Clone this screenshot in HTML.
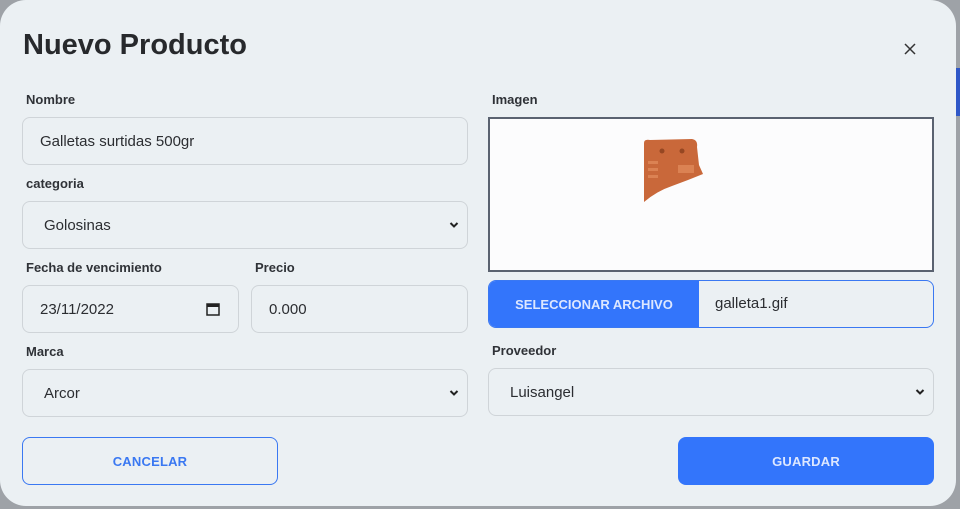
<!DOCTYPE html>
<html><head><style>
*{box-sizing:border-box;margin:0;padding:0}
body{width:960px;height:509px;background:#9ea2a7;font-family:"Liberation Sans",sans-serif;position:relative;overflow:hidden;color:#2b2d31}
.dlg{position:absolute;left:0;top:0;width:956px;height:506px;background:#ebf0f3;border-radius:26px}
.strip{position:absolute;left:956px;top:68px;width:4px;height:48px;background:#2f57c7}
.a{position:absolute}
h1{position:absolute;left:23px;top:29px;font-size:29px;font-weight:bold;color:#27292c}
.lbl{position:absolute;font-size:13px;font-weight:bold;color:#2f3237}
.in{position:absolute;border:1px solid #cfd4d8;border-radius:8px;background:#ebf0f3;font-size:15px;color:#2b2d31;display:flex;align-items:center;padding-left:17px}
.sel{padding-left:21px}
.chev{position:absolute;right:8px;top:50%;margin-top:-4px}
.btn{position:absolute;border-radius:8px;font-size:13px;font-weight:bold;display:flex;align-items:center;justify-content:center;letter-spacing:.2px}
</style></head><body>
<div class="dlg"></div>
<div class="strip"></div>
<h1>Nuevo Producto</h1>
<svg class="a" style="left:904px;top:43px" width="12" height="12" viewBox="0 0 12 12"><path d="M1 1L11 11M11 1L1 11" stroke="#333" stroke-width="1.5"/></svg>

<div class="lbl" style="left:26px;top:92px">Nombre</div>
<div class="in" style="left:22px;top:117px;width:446px;height:48px">Galletas surtidas 500gr</div>
<div class="lbl" style="left:26px;top:176px">categoria</div>
<div class="in sel" style="left:22px;top:201px;width:446px;height:48px">Golosinas<svg class="chev" width="10" height="8" viewBox="0 0 10 8"><path d="M1.5 2L5 5.5L8.5 2" stroke="#222" stroke-width="2" fill="none"/></svg></div>
<div class="lbl" style="left:26px;top:260px">Fecha de vencimiento</div>
<div class="lbl" style="left:255px;top:260px">Precio</div>
<div class="in" style="left:22px;top:285px;width:217px;height:48px">23/11/2022<svg class="a" style="right:18px;top:16px" width="14" height="14" viewBox="0 0 14 14"><rect x="1" y="2" width="12" height="11" fill="none" stroke="#222" stroke-width="1.5"/><rect x="1" y="2" width="12" height="3" fill="#222"/></svg></div>
<div class="in" style="left:251px;top:285px;width:217px;height:48px">0.000</div>
<div class="lbl" style="left:26px;top:344px">Marca</div>
<div class="in sel" style="left:22px;top:369px;width:446px;height:48px">Arcor<svg class="chev" width="10" height="8" viewBox="0 0 10 8"><path d="M1.5 2L5 5.5L8.5 2" stroke="#222" stroke-width="2" fill="none"/></svg></div>
<div class="btn" style="left:22px;top:437px;width:256px;height:48px;border:1px solid #3a78f2;color:#3a78f2">CANCELAR</div>

<div class="lbl" style="left:492px;top:92px">Imagen</div>
<div class="a" style="left:488px;top:117px;width:446px;height:155px;border:2px solid #5a6270;background:#fcfcfd"></div>
<svg class="a" style="left:642px;top:139px" width="62" height="64" viewBox="0 0 62 64"><path d="M2 4Q2 0 8 1L50 0Q56 1 55 8L57 26L61 35L46 41Q38 44 30 47Q15 52 2 63Z" fill="#c9683a"/><g fill="#e0895a" opacity=".8"><rect x="6" y="22" width="10" height="3"/><rect x="6" y="29" width="10" height="3"/><rect x="6" y="36" width="10" height="3"/><circle cx="20" cy="12" r="2.5" fill="#8a3f1d"/><circle cx="40" cy="12" r="2.5" fill="#8a3f1d"/><rect x="36" y="26" width="16" height="8"/></g></svg>
<div class="a" style="left:488px;top:280px;width:446px;height:48px;border:1px solid #3a78f2;border-radius:8px;overflow:hidden;background:#ebf0f3">
<div class="a" style="left:0;top:0;width:210px;height:46px;background:#3375fb;color:#dde7ff;font-size:13px;font-weight:bold;display:flex;align-items:center;justify-content:center">SELECCIONAR ARCHIVO</div>
<div class="a" style="left:226px;top:14px;font-size:15px">galleta1.gif</div></div>
<div class="lbl" style="left:492px;top:343px">Proveedor</div>
<div class="in sel" style="left:488px;top:368px;width:446px;height:48px">Luisangel<svg class="chev" width="10" height="8" viewBox="0 0 10 8"><path d="M1.5 2L5 5.5L8.5 2" stroke="#222" stroke-width="2" fill="none"/></svg></div>
<div class="btn" style="left:678px;top:437px;width:256px;height:48px;background:#3375fb;color:#dde7ff">GUARDAR</div>
</body></html>
